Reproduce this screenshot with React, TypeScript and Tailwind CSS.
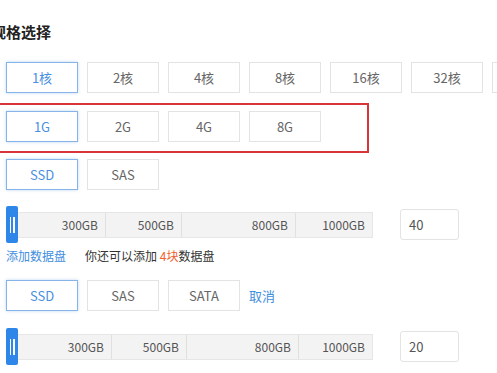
import React from "react";

const font = { fontFamily: '"Noto Sans CJK SC", "Noto Sans", sans-serif' };

function Btn({ label, active }: { label: string; active?: boolean }) {
  return (
    <div
      className={
        "w-[72px] h-[31px] flex items-center justify-center text-[13px] border box-border " +
        (active
          ? "border-[#86b4e8] text-[#4a8fe0] shadow-[0_0_3px_rgba(74,143,224,0.35)]"
          : "border-[#e3e3e3] text-[#666]")
      }
    >
      {label}
    </div>
  );
}

function Slider({ segs, value }: { segs: { label: string; w: number }[]; value: string }) {
  return (
    <div className="flex items-center h-[37px]">
      <div className="relative flex h-[37px] items-center">
        <div className="flex h-[26px] border border-[#e6e6e6] bg-[#f3f3f3]">
          {segs.map((s, i) => (
            <div
              key={i}
              style={{ width: s.w }}
              className={
                "h-full flex items-center justify-end pr-[7px] text-[12px] text-[#555] " +
                (i < segs.length - 1 ? "border-r border-[#e0e0e0]" : "")
              }
            >
              {s.label}
            </div>
          ))}
        </div>
        <div className="absolute left-0 top-0 w-[12px] h-[37px] rounded-[2px] bg-[#2e87e8] flex items-center justify-center gap-[2px]">
          <div className="w-[1.5px] h-[16px] bg-white" />
          <div className="w-[1.5px] h-[16px] bg-white" />
        </div>
      </div>
      <div className="ml-[27px] w-[59px] h-[31px] border border-[#e3e3e3] rounded-[3px] flex items-center pl-[8px] text-[13px] text-[#555]">
        {value}
      </div>
    </div>
  );
}

export default function App() {
  return (
    <div className="w-[497px] h-[373px] overflow-hidden bg-white pl-[6px] pt-[22px]" style={font}>
      <div className="ml-[-15px] text-[15px] leading-[20px] font-bold text-[#222]">规格选择</div>
      <div className="mt-[20px] flex gap-[9px] w-[600px]">
        <Btn label="1核" active />
        <Btn label="2核" />
        <Btn label="4核" />
        <Btn label="8核" />
        <Btn label="16核" />
        <Btn label="32核" />
        <Btn label="64核" />
      </div>
      <div className="mt-[10px] ml-[-16px] w-[379px] border-2 border-[#d9343a] pl-[14px] pt-[6px] pb-[9px]">
        <div className="flex gap-[9px]">
          <Btn label="1G" active />
          <Btn label="2G" />
          <Btn label="4G" />
          <Btn label="8G" />
        </div>
      </div>
      <div className="mt-[6px] flex gap-[9px]">
        <Btn label="SSD" active />
        <Btn label="SAS" />
      </div>
      <div className="mt-[16px]">
        <Slider
          value="40"
          segs={[
            { label: "300GB", w: 99 },
            { label: "500GB", w: 76 },
            { label: "800GB", w: 114 },
            { label: "1000GB", w: 76 },
          ]}
        />
      </div>
      <div className="mt-[5px] flex items-center text-[12px] leading-[16px]">
        <span className="text-[#3f8ee0]">添加数据盘</span>
        <span className="ml-[19px] text-[#333]">
          你还可以添加 <span className="text-[#f0602e]">4块</span>数据盘
        </span>
      </div>
      <div className="mt-[16px] flex items-center gap-[9px]">
        <Btn label="SSD" active />
        <Btn label="SAS" />
        <Btn label="SATA" />
        <span className="ml-[0px] text-[13px] text-[#3f8ee0]">取消</span>
      </div>
      <div className="mt-[17px]">
        <Slider
          value="20"
          segs={[
            { label: "300GB", w: 105 },
            { label: "500GB", w: 75 },
            { label: "800GB", w: 112 },
            { label: "1000GB", w: 73 },
          ]}
        />
      </div>
    </div>
  );
}
